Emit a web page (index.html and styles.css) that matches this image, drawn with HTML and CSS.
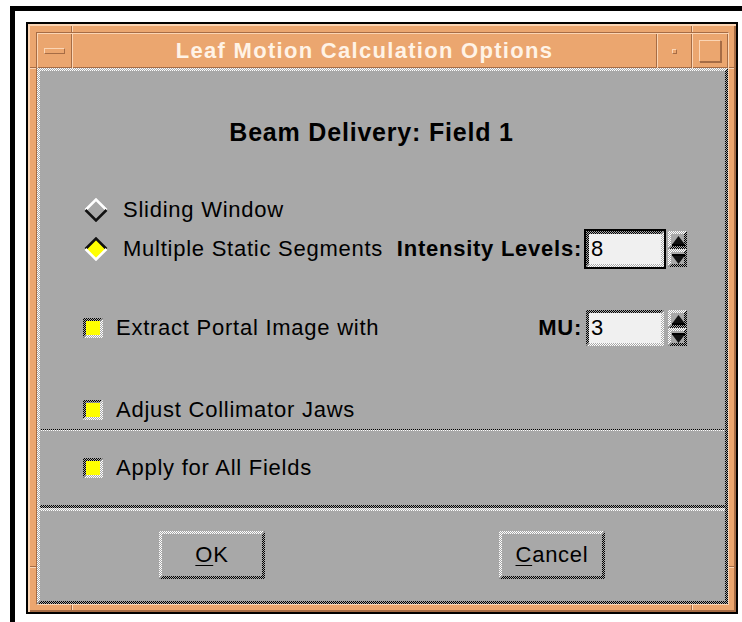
FILE: index.html
```html
<!DOCTYPE html>
<html lang="en">
<head>
<meta charset="utf-8">
<title>Leaf Motion Calculation Options</title>
<link rel="stylesheet" href="styles.css">
</head>
<body>
<div class="screen">
  <div class="mwm">
    <div class="mwm-inner">
      <div class="titlebar">
        <div class="tb-cell tb-menu"><span class="menu-bar"></span></div>
        <div class="tb-cell tb-title">Leaf Motion Calculation Options</div>
        <div class="tb-cell tb-min"><span class="min-dot"></span></div>
        <div class="tb-cell tb-max"><span class="max-box"></span></div>
      </div>

      <div class="client bev raised">
        <div class="work">
          <div class="heading">Beam Delivery: Field 1</div>

          <div class="row r-slide">
            <svg class="radio" width="24" height="24" viewBox="0 0 24 24">
              <polygon points="12,1 23,12 12,23 1,12" fill="#a8a8a8"/>
              <polyline points="1.5,12 12,1.5 22.5,12" fill="none" stroke="#fff" stroke-width="2.5"/>
              <polyline points="1.5,12 12,22.5 22.5,12" fill="none" stroke="#111" stroke-width="2.5"/>
            </svg>
            <span class="lbl">Sliding Window</span>
          </div>

          <div class="row r-multi">
            <svg class="radio" width="24" height="24" viewBox="0 0 24 24">
              <polygon points="12,1 23,12 12,23 1,12" fill="#ffff00"/>
              <polyline points="1.5,12 12,1.5 22.5,12" fill="none" stroke="#111" stroke-width="2.5"/>
              <polyline points="1.5,12 12,22.5 22.5,12" fill="none" stroke="#fff" stroke-width="2.5"/>
            </svg>
            <span class="lbl">Multiple Static Segments</span>
            <div class="spinfield">
              <span class="key">Intensity Levels:</span>
              <div class="field bev sunken focus">8</div>
              <div class="spin">
                <span class="arrow bev raised">
                  <svg width="15" height="14" viewBox="0 0 15 14"><polygon points="7.5,2 13.5,10 1.5,10" fill="#111"/><rect x="1" y="10" width="13" height="2" fill="#000"/></svg>
                </span>
                <span class="arrow bev raised">
                  <svg width="15" height="14" viewBox="0 0 15 14"><rect x="1" y="2" width="13" height="2" fill="#000"/><polygon points="1.5,4 13.5,4 7.5,12" fill="#111"/></svg>
                </span>
              </div>
            </div>
          </div>

          <div class="row r-extract">
            <span class="check bev sunken"></span>
            <span class="lbl">Extract Portal Image with</span>
            <div class="spinfield">
              <span class="key">MU:</span>
              <div class="field bev sunken">3</div>
              <div class="spin">
                <span class="arrow bev raised">
                  <svg width="15" height="14" viewBox="0 0 15 14"><polygon points="7.5,2 13.5,10 1.5,10" fill="#111"/><rect x="1" y="10" width="13" height="2" fill="#000"/></svg>
                </span>
                <span class="arrow bev raised">
                  <svg width="15" height="14" viewBox="0 0 15 14"><rect x="1" y="2" width="13" height="2" fill="#000"/><polygon points="1.5,4 13.5,4 7.5,12" fill="#111"/></svg>
                </span>
              </div>
            </div>
          </div>

          <div class="row r-adjust">
            <span class="check bev sunken"></span>
            <span class="lbl">Adjust Collimator Jaws</span>
          </div>

          <div class="sep thin"></div>

          <div class="row r-apply">
            <span class="check bev sunken"></span>
            <span class="lbl">Apply for All Fields</span>
          </div>
        </div>

        <div class="sep thick"></div>

        <div class="actions">
          <div class="btn bev raised"><span class="mn">O</span>K</div>
          <div class="btn bev raised"><span class="mn">C</span>ancel</div>
        </div>
      </div>
    </div>
  </div>
</div>
</body>
</html>
```
FILE: styles.css
```css
:root {
  --gray: #a8a8a8;
  --org: #eba66f;
  --org-lt: #fbd5b4;
  --org-dk: #a66c45;
  /* 1px stipple patterns used for Motif-style shadows */
  --lt: repeating-conic-gradient(#ffffff 0 25%, #a8a8a8 0 50%);
  --dk: repeating-conic-gradient(#000000 0 25%, #a8a8a8 0 50%);
}

html, body {
  margin: 0;
  height: 100%;
  overflow: hidden;
  background: #fff;
}

body {
  font-family: "Liberation Sans", Arial, sans-serif;
  font-size: 22px;
  letter-spacing: 0.75px;
  color: #000;
}

.screen {
  margin: 6px 0 0 10px;
  border-left: 5px solid #000;
  border-top: 5px solid #000;
  padding: 11px 0 0 11px;
  height: calc(100vh - 22px);
  background: #fff;
}

/* window manager frame */
.mwm {
  box-sizing: border-box;
  width: 712px;
  height: 592px;
  border: 2px solid #000;
  padding: 8px 7px 7px 8px;
  background-color: var(--org);
  background-image:
    linear-gradient(90deg, var(--org-dk) 50%, var(--org-lt) 50%),
    linear-gradient(90deg, var(--org-dk) 50%, var(--org-lt) 50%),
    linear-gradient(90deg, var(--org-dk) 50%, var(--org-lt) 50%),
    linear-gradient(90deg, var(--org-dk) 50%, var(--org-lt) 50%),
    linear-gradient(var(--org-dk) 50%, var(--org-lt) 50%),
    linear-gradient(var(--org-dk) 50%, var(--org-lt) 50%),
    linear-gradient(var(--org-dk) 50%, var(--org-lt) 50%),
    linear-gradient(var(--org-dk) 50%, var(--org-lt) 50%);
  background-repeat: no-repeat;
  background-size:
    2px 8px, 2px 8px, 2px 7px, 2px 7px,
    8px 2px, 7px 2px, 8px 2px, 7px 2px;
  background-position:
    43px 0, 663px 0, 43px 581px, 663px 581px,
    0 43px, 701px 43px, 0 542px, 701px 542px;
  box-shadow: inset 2px 2px 0 var(--org-lt), inset -2px -2px 0 var(--org-dk);
}

.mwm-inner {
  box-sizing: border-box;
  height: 100%;
  border: 1px solid;
  border-color: var(--org-dk) var(--org-lt) var(--org-lt) var(--org-dk);
  display: flex;
  flex-direction: column;
}

.titlebar {
  display: flex;
  height: 35px;
  flex: none;
  background: var(--org);
}

.tb-cell {
  display: flex;
  align-items: center;
  justify-content: center;
  box-shadow: inset 1px 1px 0 var(--org-lt), inset -1px -1px 0 var(--org-dk);
}

.tb-menu { width: 35px; }
.tb-min { width: 35px; }
.tb-max { width: 36px; }

.tb-title {
  flex: 1;
  font-weight: bold;
  font-size: 22px;
  letter-spacing: 1.3px;
  color: #fff3e6;
}

.menu-bar {
  width: 21px;
  height: 6px;
  box-sizing: border-box;
  border: 1px solid;
  border-color: var(--org-lt) var(--org-dk) var(--org-dk) var(--org-lt);
  margin-top: 1px;
}

.min-dot {
  width: 5px;
  height: 5px;
  box-sizing: border-box;
  border: 1px solid;
  border-color: var(--org-lt) var(--org-dk) var(--org-dk) var(--org-lt);
  margin-top: 1px;
}

.max-box {
  width: 22px;
  height: 22px;
  box-sizing: border-box;
  border: 1px solid;
  border-color: var(--org-lt) var(--org-dk) var(--org-dk) var(--org-lt);
  box-shadow: 1px 1px 0 var(--org-dk);
}

/* stippled bevel: light/dark L shapes around a face colour */
.bev {
  position: relative;
  box-sizing: border-box;
  border: var(--bw, 2px) solid transparent;
  background:
    linear-gradient(var(--face, #a8a8a8), var(--face, #a8a8a8)) padding-box,
    var(--br) 0 0 / 2px 2px border-box;
}

.bev::before {
  content: "";
  position: absolute;
  inset: calc(var(--bw, 2px) * -1);
  background: var(--tl) 0 0 / 2px 2px;
  clip-path: polygon(0 0, 100% 0,
    calc(100% - var(--bw, 2px)) var(--bw, 2px),
    var(--bw, 2px) var(--bw, 2px),
    var(--bw, 2px) calc(100% - var(--bw, 2px)),
    0 100%);
  pointer-events: none;
}

.raised { --tl: var(--lt); --br: var(--dk); }
.sunken { --tl: var(--dk); --br: var(--lt); }

.client {
  --bw: 3px;
  flex: 1;
  display: flex;
  flex-direction: column;
}

.work {
  display: flex;
  flex-direction: column;
  flex: none;
}

.heading {
  box-sizing: border-box;
  height: 120px;
  padding: 46px 22px 0 0;
  line-height: 30px;
  text-align: center;
  font-weight: bold;
  font-size: 25px;
  letter-spacing: 0.8px;
}

.row {
  display: flex;
  align-items: center;
  line-height: 26px;
  flex: none;
}

.r-slide { height: 38px; }
.r-multi { height: 40px; }
.r-extract { height: 40px; margin-top: 39px; }
.r-adjust { height: 39px; margin-top: 42px; }
.r-apply { height: 74px; }

.radio {
  flex: none;
  margin-left: 44px;
  margin-right: 15px;
}

.check {
  --bw: 3px;
  --face: #ffff00;
  flex: none;
  width: 20px;
  height: 20px;
  margin-left: 43px;
  margin-right: 13px;
}

.spinfield {
  margin-left: auto;
  margin-right: 38px;
  display: flex;
  align-items: center;
}

.key {
  font-weight: bold;
}

.field {
  --face: #f0f0f0;
  width: 78px;
  height: 36px;
  margin: 0 4px;
  padding-left: 2px;
  display: flex;
  align-items: center;
}

.focus {
  outline: 2px solid #000;
}

.spin {
  display: flex;
  flex-direction: column;
}

.arrow {
  width: 19px;
  height: 18px;
  display: block;
}

.arrow svg {
  display: block;
}

.sep {
  flex: none;
  background:
    var(--lt) 0 0 / 2px 2px content-box,
    var(--dk) 0 0 / 2px 2px border-box;
}

.sep.thin { height: 1px; padding-top: 1px; }
.sep.thick { height: 3px; padding-top: 3px; }

.actions {
  flex: 1;
  display: flex;
  align-items: flex-start;
  padding: 20px 0 0 119px;
  gap: 234px;
}

.btn {
  width: 106px;
  height: 48px;
  display: flex;
  align-items: center;
  justify-content: center;
}

.mn {
  text-decoration: underline;
  text-underline-offset: 3px;
  text-decoration-thickness: 1px;
}
```
